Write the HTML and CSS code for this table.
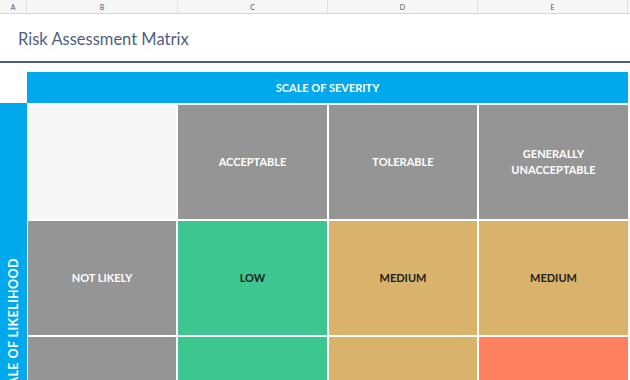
FILE: index.html
```html
<!DOCTYPE html>
<html lang="en">
<head>
  <meta charset="UTF-8" />
  <meta name="viewport" content="width=device-width, initial-scale=1.0" />
  <title>Risk Assessment Matrix</title>
  <link rel="stylesheet" href="styles.css">
</head>
<body>
  <div class="sheet-head">
    <div class="col-letter col-a">A</div>
    <div class="col-letter col-b">B</div>
    <div class="col-letter col-c">C</div>
    <div class="col-letter col-d">D</div>
    <div class="col-letter col-e">E</div>
  </div>

  <div class="title-row">
    <h1>Risk Assessment Matrix</h1>
  </div>

  <div class="matrix">
    <div class="severity">SCALE OF SEVERITY</div>

    <div class="likelihood"><span>SCALE OF LIKELIHOOD</span></div>

    <div class="cell corner"></div>
    <div class="cell label">ACCEPTABLE</div>
    <div class="cell label">TOLERABLE</div>
    <div class="cell label">GENERALLY<br>UNACCEPTABLE</div>

    <div class="cell label">NOT LIKELY</div>
    <div class="cell low">LOW</div>
    <div class="cell medium">MEDIUM</div>
    <div class="cell medium">MEDIUM</div>

    <div class="cell label">LIKELY</div>
    <div class="cell low">LOW</div>
    <div class="cell medium">MEDIUM</div>
    <div class="cell high">HIGH</div>

    <div class="cell label">VERY LIKELY</div>
    <div class="cell medium">MEDIUM</div>
    <div class="cell high">HIGH</div>
    <div class="cell high">HIGH</div>
  </div>
</body>
</html>
```

FILE: styles.css
```css
body {
  font-family: Lato, "Open Sans", sans-serif;
  background-color: #fff;
  margin: 0;
  padding: 0;
  width: 630px;
  height: 380px;
  overflow: hidden;
}

/* spreadsheet column letters */
.sheet-head {
  display: flex;
  height: 13px;
  background: #f6f6f6;
  border-bottom: 1px solid #d6d6d6;
}

.col-letter {
  display: flex;
  justify-content: center;
  align-items: center;
  font-size: 7px;
  color: #555;
  border-right: 1px solid #e2e2e2;
  box-sizing: border-box;
}

.col-a { width: 27px; }
.col-b { width: 151px; }
.col-c { width: 150px; }
.col-d { width: 150px; }
.col-e { width: 150px; }

.title-row {
  height: 47px;
  border-bottom: 2px solid #4f5f80;
  display: flex;
  align-items: center;
  padding-left: 18px;
}

h1 {
  margin: 0;
  font-size: 16.5px;
  font-weight: 400;
  color: #4f5f80;
  padding-top: 2px;
}

/* the matrix itself */
.matrix {
  margin-top: 9px;
  display: grid;
  grid-template-columns: 26px 148px 149px 148px 149px;
  grid-template-rows: 31px repeat(4, 114px);
  gap: 2px;
}

.severity {
  grid-column: 2 / 6;
  margin-left: -1px;
  background: #00a9eb;
  color: #fff;
  font-weight: 700;
  font-size: 11px;
  display: flex;
  justify-content: center;
  align-items: center;
}

.likelihood {
  grid-column: 1;
  grid-row: 2 / 6;
  margin-top: -2px;
  margin-right: -1px;
  background: #00a9eb;
  color: #fff;
  font-weight: 700;
  font-size: 12.5px;
  letter-spacing: 0.4px;
  display: flex;
  justify-content: center;
  align-items: flex-start;
  padding-top: 155px;
}

.likelihood span {
  writing-mode: vertical-rl;
  transform: rotate(180deg);
  white-space: nowrap;
}

.cell {
  display: flex;
  justify-content: center;
  align-items: center;
  text-align: center;
  font-weight: 700;
  font-size: 11px;
  line-height: 16px;
}

.corner {
  background: #f7f7f7;
  margin-left: -1px;
}

.label {
  background: #959595;
  color: #fff;
}

.low {
  background: #3ec691;
  color: #1d1d1d;
}

.medium {
  background: #d9b36b;
  color: #1d1d1d;
}

.high {
  background: #ff7f61;
  color: #1d1d1d;
}
```
